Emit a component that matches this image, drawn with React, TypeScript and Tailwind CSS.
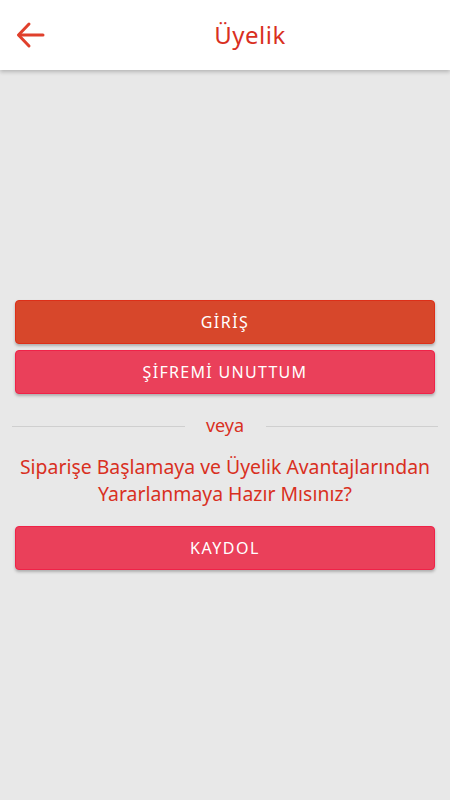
import React from "react";

export default function App() {
  const font = { fontFamily: '"Noto Sans", "Open Sans", sans-serif' };
  return (
    <div className="w-[450px] h-[800px] bg-[#e8e8e8] flex flex-col" style={font}>
      <header className="h-[70px] bg-white flex items-center shadow-[0_2px_4px_rgba(0,0,0,0.22)] relative z-10">
        <button className="w-[62px] h-full flex items-center justify-center pl-[0px]">
          <svg width="30" height="28" viewBox="0 0 30 28" fill="none" stroke="#e0402c" strokeWidth="3" strokeLinecap="round" strokeLinejoin="round">
            <path d="M27 14H3" />
            <path d="M13 3L2.5 14L13 25" />
          </svg>
        </button>
        <div className="flex-1 text-center pr-[12px] text-[24px] text-[#d9301f] leading-none tracking-[0.5px]">Üyelik</div>
      </header>
      <main className="flex-1 flex flex-col pt-[230px] px-[15px]">
        <button className="h-[44px] rounded-[4px] bg-[#d7472b] border border-[#dd2f18] text-white text-[16px] tracking-[1.5px] shadow-[0_2px_3px_rgba(0,0,0,0.25)]">
          GİRİŞ
        </button>
        <button className="mt-[6px] h-[44px] rounded-[4px] bg-[#ea405a] border border-[#f02248] text-white text-[16px] tracking-[1.3px] shadow-[0_2px_3px_rgba(0,0,0,0.25)]">
          ŞİFREMİ UNUTTUM
        </button>
        <div className="mt-[22px] -mx-[3px] flex items-center">
          <div className="flex-1 h-px bg-[#cfcfcf]" />
          <div className="w-[81px] text-center text-[18px] text-[#d9301f] leading-none pb-[2px]">veya</div>
          <div className="flex-1 h-px bg-[#cfcfcf]" />
        </div>
        <p className="mt-[18px] -mx-[10px] text-center text-[19.4px] leading-[26.5px] text-[#d9301f]">
          Siparişe Başlamaya ve Üyelik Avantajlarından
          <br />
          Yararlanmaya Hazır Mısınız?
        </p>
        <button className="mt-[19px] h-[44px] rounded-[4px] bg-[#ea405a] border border-[#f02248] text-white text-[16px] tracking-[1.5px] shadow-[0_2px_3px_rgba(0,0,0,0.25)]">
          KAYDOL
        </button>
      </main>
    </div>
  );
}
